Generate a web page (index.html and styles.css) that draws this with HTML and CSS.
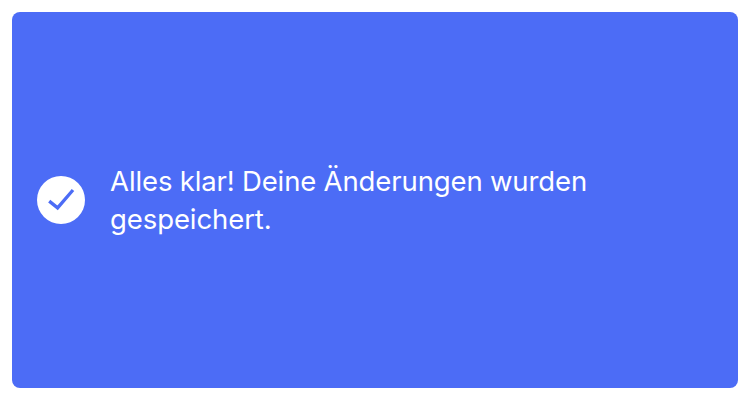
FILE: index.html
```html
<!DOCTYPE html>
<html lang="de">
<head>
<meta charset="utf-8">
<title>Alles klar!</title>
<link rel="stylesheet" href="styles.css">
</head>
<body>
<div class="toast" role="status">
  <svg class="icon" viewBox="0 0 48 48" aria-hidden="true">
    <circle cx="24" cy="24" r="24" fill="#fff"/>
    <path d="M12.2 25.1l8.4 6.8L36 14" fill="none" stroke="#4c6cf6" stroke-width="3.3"/>
  </svg>
  <p class="message">Alles klar! Deine Änderungen wurden gespeichert.</p>
</div>
</body>
</html>
```
FILE: styles.css
```css
body {
  margin: 0;
  padding: 12px;
  height: 100vh;
  box-sizing: border-box;
  background: #fff;
}

.toast {
  display: flex;
  align-items: center;
  gap: 25px;
  height: 100%;
  box-sizing: border-box;
  padding: 0 120px 0 25px;
  border-radius: 8px;
  background: #4c6cf6;
}

.icon {
  flex: none;
  width: 48px;
  height: 48px;
}

.message {
  margin: 0;
  color: #fff;
  font: 400 27.5px/38px Inter, sans-serif;
  letter-spacing: -0.09px;
  word-spacing: -0.4px;
}
```
